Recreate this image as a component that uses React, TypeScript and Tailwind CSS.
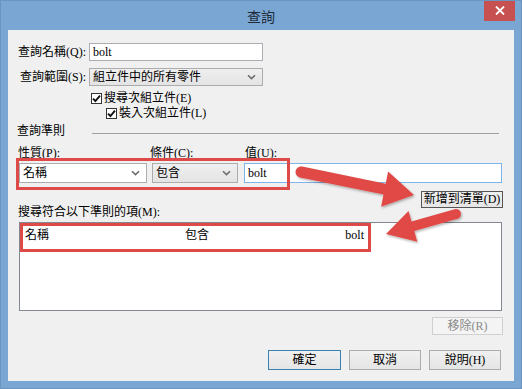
import React from "react";

const Chevron = () => (
  <svg width="9" height="6" viewBox="0 0 9 6" className="shrink-0">
    <path d="M1 1.2 L4.5 4.6 L8 1.2" fill="none" stroke="#6d6d6d" strokeWidth="1.6" />
  </svg>
);

const Check = ({ label, className }: { label: string; className?: string }) => (
  <div className={"flex items-center h-[15px] " + (className ?? "")}>
    <div className="w-[11px] h-[11px] bg-white border border-[#333] flex items-center justify-center">
      <svg width="9" height="9" viewBox="0 0 9 9">
        <path d="M1 4.6 L3.4 7 L8 1.6" fill="none" stroke="#111" strokeWidth="1.9" />
      </svg>
    </div>
    <span className="ml-[2px] leading-[15px]">{label}</span>
  </div>
);

const Btn = ({
  children,
  className,
}: {
  children: React.ReactNode;
  className?: string;
}) => (
  <div
    className={
      "flex items-center justify-center bg-gradient-to-b from-[#f0f0f0] to-[#e5e5e5] border " +
      (className ?? "")
    }
  >
    {children}
  </div>
);

export default function App() {
  return (
    <div className="relative w-[522px] h-[389px] overflow-hidden bg-[#7aa6d4] border border-[#6b94c0] text-[12px] text-black font-['Liberation_Serif','Noto_Sans_CJK_TC',serif]">
      {/* Title bar */}
      <div className="relative h-[29px] flex items-center justify-center">
        <span className="text-[14px] text-[#1e2a38] font-['Noto_Sans_CJK_TC',sans-serif] mt-[1px]">查詢</span>
        <div className="absolute top-[-1px] right-[6px] w-[31px] h-[21px] bg-[#c75050] flex items-center justify-center">
          <svg width="10" height="9" viewBox="0 0 10 9">
            <path d="M1 0.5 L9 8.5 M9 0.5 L1 8.5" stroke="#fff" strokeWidth="1.8" />
          </svg>
        </div>
      </div>

      {/* Client area */}
      <div className="mx-[7px] h-[351px] bg-[#f0f0f0] flex flex-col">
        {/* Row 1 */}
        <div className="flex items-center h-[18px] mt-[13px] shrink-0">
          <div className="w-[79px] text-right pr-[1px] leading-[18px]">查詢名稱(Q):</div>
          <div className="ml-[2px] w-[174px] h-[18px] bg-white border border-[#abadb3] flex items-center pl-[3px] leading-[16px]">
            bolt
          </div>
        </div>
        {/* Row 2 */}
        <div className="flex items-center h-[18px] mt-[7px] shrink-0">
          <div className="w-[79px] text-right pr-[1px] leading-[18px]">查詢範圍(S):</div>
          <div className="ml-[2px] w-[174px] h-[18px] bg-gradient-to-b from-[#efefef] to-[#e4e4e4] border border-[#acacac] flex items-center justify-between pl-[3px] pr-[6px]">
            <span className="leading-[16px]">組立件中的所有零件</span>
            <Chevron />
          </div>
        </div>
        {/* checkboxes */}
        <Check label="搜尋次組立件(E)" className="ml-[83px] mt-[5px] shrink-0" />
        <Check label="裝入次組立件(L)" className="ml-[98px] shrink-0" />

        {/* 查詢準則 */}
        <div className="flex items-center h-[14px] mt-[3px] shrink-0">
          <span className="ml-[9px] w-[75px] leading-[14px]">查詢準則</span>
          <div className="w-[407px] h-px bg-[#a0a0a0] mt-[4px]" />
        </div>

        {/* Labels */}
        <div className="flex h-[14px] mt-[8px] leading-[14px] shrink-0">
          <span className="ml-[10px] w-[132px]">性質(P):</span>
          <span className="w-[95px]">條件(C):</span>
          <span>值(U):</span>
        </div>

        {/* Controls */}
        <div className="flex items-center h-[20px] mt-[3px] ml-[11px] shrink-0">
          <div className="w-[128px] h-[20px] bg-white border border-[#abadb3] flex items-center justify-between pl-[3px] pr-[6px]">
            <span className="leading-[18px]">名稱</span>
            <Chevron />
          </div>
          <div className="ml-[5px] w-[86px] h-[20px] bg-gradient-to-b from-[#efefef] to-[#e4e4e4] border border-[#acacac] flex items-center justify-between pl-[3px] pr-[6px]">
            <span className="leading-[18px]">包含</span>
            <Chevron />
          </div>
          <div className="ml-[6px] w-[258px] h-[20px] bg-white border border-[#7eb4ea] flex items-center pl-[3px]">
            <span className="leading-[18px]">bolt</span>
          </div>
        </div>

        {/* Add button */}
        <div className="flex justify-end h-[17px] mt-[8px] pr-[11px] shrink-0">
          <Btn className="w-[82px] h-[17px] border-[#555]">
            <span className="leading-[15px]">新增到清單(D)</span>
          </Btn>
        </div>

        {/* List label */}
        <div className="ml-[10px] h-[14px] mt-[-3px] leading-[14px] shrink-0">搜尋符合以下準則的項(M):</div>

        {/* List */}
        <div className="ml-[11px] mt-[3px] w-[483px] h-[89px] bg-white border border-[#828790] shrink-0">
          <div className="flex items-center h-[24px] w-[350px] pl-[5px] pr-[6px]">
            <span className="w-[160px]">名稱</span>
            <span className="flex-1">包含</span>
            <span>bolt</span>
          </div>
        </div>

        {/* Remove */}
        <div className="flex justify-end mt-[6px] pr-[11px] shrink-0">
          <Btn className="w-[71px] h-[18px] border-[#d0d0d0] from-[#f4f4f4] to-[#f4f4f4]">
            <span className="text-[#8a8a8a] leading-[16px]">移除(R)</span>
          </Btn>
        </div>

        {/* Bottom buttons */}
        <div className="flex justify-end gap-[8px] mt-[15px] pr-[13px] shrink-0">
          <Btn className="w-[73px] h-[20px] border-[#3c7fb1]">
            <span className="leading-[18px]">確定</span>
          </Btn>
          <Btn className="w-[72px] h-[20px] border-[#acacac]">
            <span className="leading-[18px]">取消</span>
          </Btn>
          <Btn className="w-[72px] h-[20px] border-[#acacac]">
            <span className="leading-[18px]">說明(H)</span>
          </Btn>
        </div>
      </div>

      {/* Annotation overlay */}
      <svg className="absolute inset-0 pointer-events-none" width="522" height="389" viewBox="0 0 522 389">
        <defs>
          <filter id="sh" x="-20%" y="-20%" width="140%" height="140%">
            <feDropShadow dx="1" dy="1.5" stdDeviation="1.2" floodColor="#000" floodOpacity="0.3" />
          </filter>
        </defs>
        <rect x="16.5" y="158.5" width="271" height="29" fill="none" stroke="#de4a47" strokeWidth="3" />
        <rect x="20.5" y="223.5" width="348" height="26" fill="none" stroke="#de4a47" strokeWidth="3" />
        <g filter="url(#sh)" fill="#e04a45">
          <path d="M301.1 165.6 L384.7 182.7 L387.1 170.5 L413 194 L380.1 205.7 L382.5 193.5 L298.9 176.4 A5.5 5.5 0 0 1 301.1 165.6 Z" />
          <path d="M453.6 208.2 L410.5 220.5 L407.5 209.9 L385 233 L416.3 240.7 L413.3 230.1 L456.4 217.8 A5 5 0 0 0 453.6 208.2 Z" />
        </g>
      </svg>
    </div>
  );
}
